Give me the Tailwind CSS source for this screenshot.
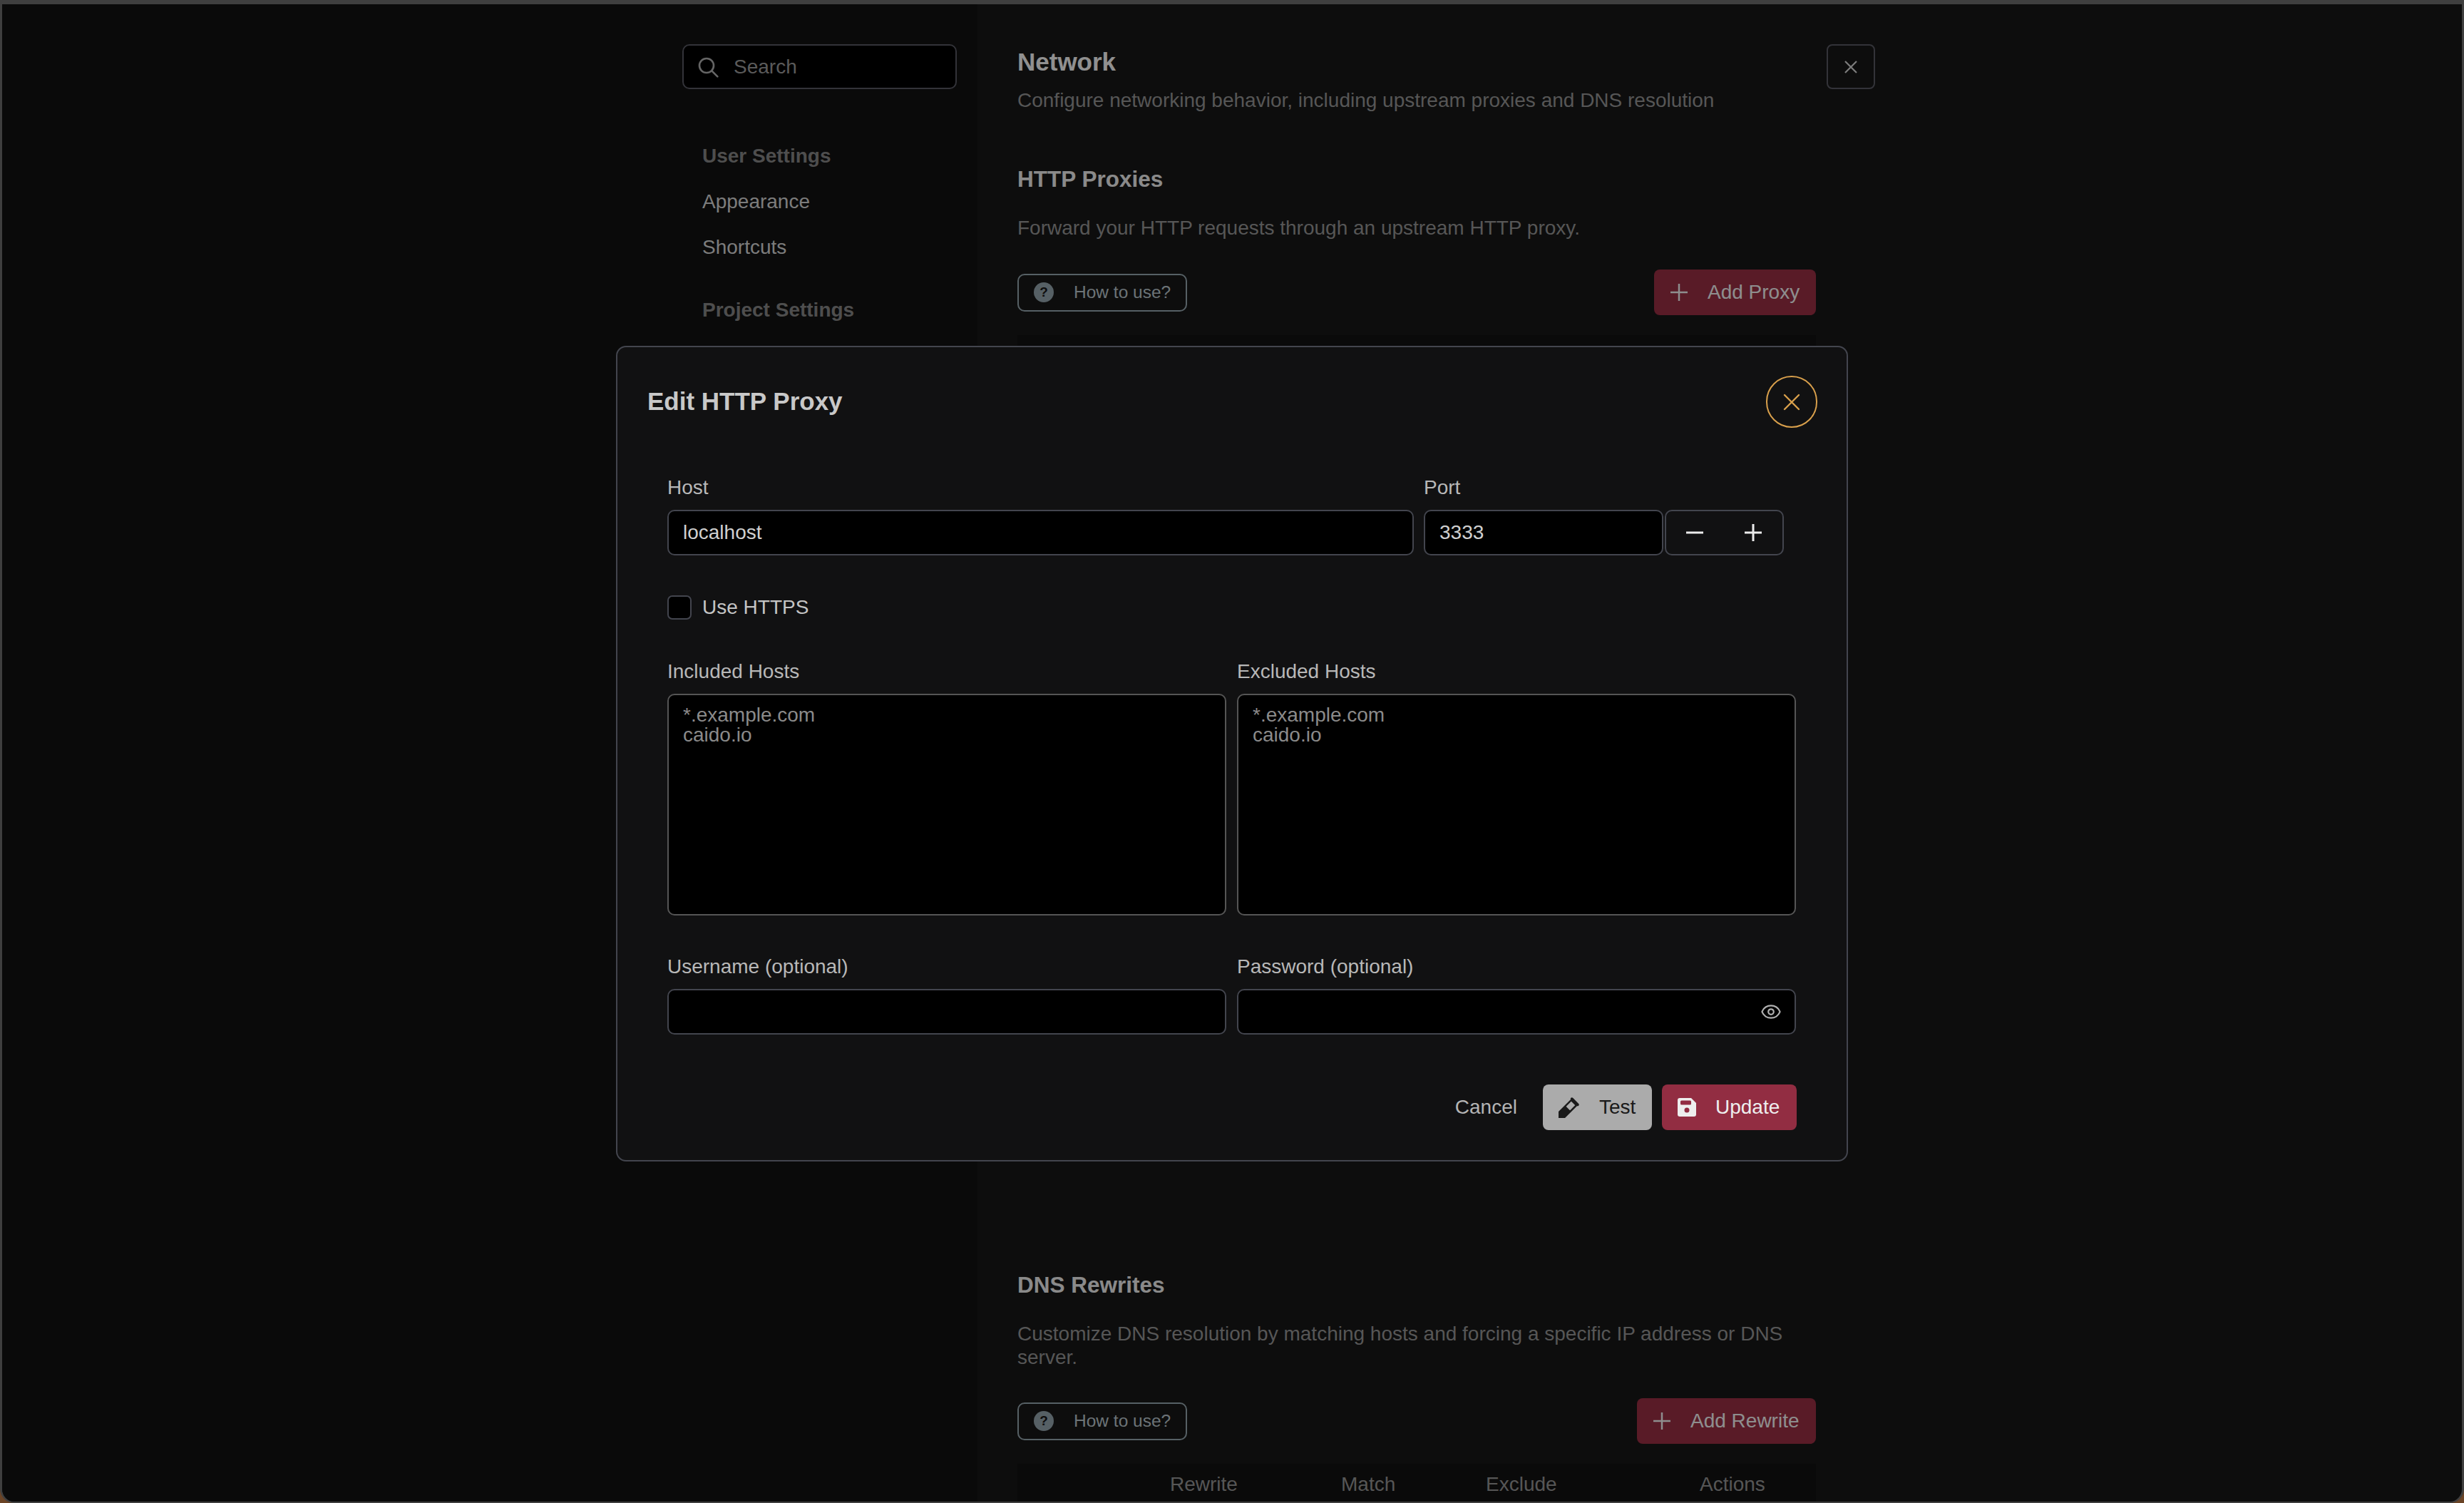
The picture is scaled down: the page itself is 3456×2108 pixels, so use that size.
<!DOCTYPE html>
<html lang="en">
<head>
    <meta charset="UTF-8">
    <title>Network</title>
    <script src="https://cdn.jsdelivr.net/npm/@tailwindcss/browser@4"></script>
</head>
<body class="bg-[#6b4426] font-['Liberation_Sans',Arial,sans-serif] text-[28px]">
    <div class="relative w-[3456px] h-[2108px] overflow-hidden rounded-b-[20px] border-t-[6px] border-x-[3px] border-b-[2px] border-[#3f3f3f] bg-[#161616]">
        <div class="flex h-full">
            <!-- sidebar -->
            <aside class="flex w-[1368px] shrink-0 justify-end bg-[#111111] pr-[29px] pt-[56px]">
                <div class="w-[385px]">
                    <div class="flex h-[63px] items-center rounded-[10px] border-2 border-[#55565f] bg-black pl-[18px] text-[#969696]">
                        <svg class="w-[32px] h-[32px]" viewBox="0 0 24 24" fill="none" stroke="#a8a8a8" stroke-width="2" stroke-linecap="round"><circle cx="10.5" cy="10.5" r="7.5"/><path d="M16 16l6 6"/></svg>
                        <span class="ml-[20px]">Search</span>
                    </div>
                    <div class="mt-[61px] pl-[28px]">
                        <div class="flex h-[65px] items-center font-bold text-[#828282]">User Settings</div>
                        <div class="flex h-[64px] items-center text-[#cfcfcf]">Appearance</div>
                        <div class="flex h-[63px] items-center text-[#cfcfcf]">Shortcuts</div>
                        <div class="mt-[25px] flex h-[64px] items-center font-bold text-[#828282]">Project Settings</div>
                    </div>
                </div>
            </aside>

            <!-- main -->
            <main class="flex items-start pl-[56px]">
                <div class="w-[1120px] pt-[61px]">
                    <h1 class="h-[40px] text-[35px] font-bold leading-[40px] text-[#f0f0f0]">Network</h1>
                    <p class="mt-[14px] h-[40px] leading-[40px] text-[#909090]">Configure networking behavior, including upstream proxies and DNS resolution</p>

                    <h2 class="mt-[70px] h-[40px] text-[31.5px] font-bold leading-[40px] text-[#e6e6e6]">HTTP Proxies</h2>
                    <p class="mt-[29px] h-[40px] leading-[40px] text-[#909090]">Forward your HTTP requests through an upstream HTTP proxy.</p>
                    <div class="mt-[38px] flex h-[64px] items-center justify-between">
                        <button class="flex h-[53px] w-[238px] items-center rounded-[10px] border-2 border-[#90a0a8] pl-[21px] text-[24.5px] text-[#b4c0c6]">
                            <span class="flex h-[28px] w-[28px] items-center justify-center rounded-full bg-[#90a0a8] text-[19px] font-bold text-[#161616]">?</span>
                            <span class="ml-[28px]">How to use?</span>
                        </button>
                        <button class="flex h-[64px] w-[227px] items-center rounded-[8px] bg-[#942d42] pl-[23px] text-[#ededed]">
                            <svg class="w-[24px] h-[24px]" viewBox="0 0 24 24" fill="none" stroke="#ededed" stroke-width="2.5"><path d="M12 0v24M0 12h24"/></svg>
                            <span class="ml-[28px]">Add Proxy</span>
                        </button>
                    </div>
                    <div class="mt-[28px] h-[1100px] bg-[#121212]"></div>

                    <h2 class="mt-[212px] h-[40px] text-[31.5px] font-bold leading-[40px] text-[#e6e6e6]">DNS Rewrites</h2>
                    <p class="mt-[32px] leading-[33px] text-[#909090]">Customize DNS resolution by matching hosts and forcing a specific IP address or DNS server.</p>
                    <div class="mt-[41px] flex h-[64px] items-center justify-between">
                        <button class="flex h-[53px] w-[238px] items-center rounded-[10px] border-2 border-[#90a0a8] pl-[21px] text-[24.5px] text-[#b4c0c6]">
                            <span class="flex h-[28px] w-[28px] items-center justify-center rounded-full bg-[#90a0a8] text-[19px] font-bold text-[#161616]">?</span>
                            <span class="ml-[28px]">How to use?</span>
                        </button>
                        <button class="flex h-[64px] w-[251px] items-center rounded-[8px] bg-[#942d42] pl-[23px] text-[#ededed]">
                            <svg class="w-[24px] h-[24px]" viewBox="0 0 24 24" fill="none" stroke="#ededed" stroke-width="2.5"><path d="M12 0v24M0 12h24"/></svg>
                            <span class="ml-[28px]">Add Rewrite</span>
                        </button>
                    </div>
                    <div class="mt-[28px] flex h-[58px] items-center bg-[#121212] pl-[214px] text-[#909090]">
                        <div class="w-[240px]">Rewrite</div>
                        <div class="w-[203px]">Match</div>
                        <div class="w-[300px]">Exclude</div>
                        <div>Actions</div>
                    </div>
                </div>
                <button class="ml-[15px] mt-[56px] flex h-[63px] w-[68px] items-center justify-center rounded-[8px] border-2 border-[#55565f]">
                    <svg class="w-[18px] h-[18px]" viewBox="0 0 18 18" fill="none" stroke="#d0d0d0" stroke-width="2.2"><path d="M1 1l16 16M17 1L1 17"/></svg>
                </button>
            </main>
        </div>

        <!-- dim layer -->
        <div class="absolute inset-0 bg-black/40"></div>

        <!-- modal -->
        <div class="absolute left-[861px] top-[479px] h-[1144px] w-[1728px] rounded-[14px] border-2 border-[#43454e] bg-[#111112]">
            <div class="flex h-[73px] mt-[40px] items-center justify-between pl-[42px] pr-[41px]">
                <h3 class="text-[35px] font-bold text-[#c8c8c8]">Edit HTTP Proxy</h3>
                <button class="flex h-[73px] w-[72px] items-center justify-center rounded-full border-2 border-[#d9a04c]">
                    <svg class="w-[24px] h-[24px]" viewBox="0 0 24 24" fill="none" stroke="#d9a04c" stroke-width="2.4" stroke-linecap="round"><path d="M2 2l20 20M22 2L2 22"/></svg>
                </button>
            </div>

            <div class="px-[70px] pt-[64px] text-[#b8b8b8]">
                <div class="flex">
                    <div class="w-[1047px]">
                        <div class="h-[40px] leading-[40px]">Host</div>
                        <div class="mt-[11px] flex h-[64px] items-center rounded-[10px] border-2 border-[#43454e] bg-black pl-[20px] text-[#d0d0d0]">localhost</div>
                    </div>
                    <div class="ml-[14px] w-[336px]">
                        <div class="h-[40px] leading-[40px]">Port</div>
                        <div class="mt-[11px] flex h-[64px] items-center rounded-[10px] border-2 border-[#43454e] bg-black pl-[20px] text-[#d0d0d0]">3333</div>
                    </div>
                    <div class="ml-[2px] mt-[51px] flex h-[64px] w-[167px] items-center rounded-[10px] border-2 border-[#43454e] pl-[28px]">
                        <svg class="w-[24px] h-[24px]" viewBox="0 0 24 24" fill="none" stroke="#ececec" stroke-width="3"><path d="M0 12h24"/></svg>
                        <svg class="ml-[58px] w-[24px] h-[24px]" viewBox="0 0 24 24" fill="none" stroke="#ececec" stroke-width="3"><path d="M12 0v24M0 12h24"/></svg>
                    </div>
                </div>

                <div class="mt-[56px] flex h-[34px] items-center">
                    <div class="h-[34px] w-[34px] rounded-[7px] border-2 border-[#43454e] bg-black"></div>
                    <span class="ml-[15px] text-[#c4c4c4]">Use HTTPS</span>
                </div>

                <div class="mt-[53px] grid grid-cols-[784px_784px] gap-x-[15px]">
                    <div>
                        <div class="h-[40px] leading-[40px]">Included Hosts</div>
                        <div class="mt-[11px] h-[311px] rounded-[10px] border-2 border-[#555555] bg-black pl-[20px] pt-[14px] leading-[28px] text-[#8a8a8a]">*.example.com<br>caido.io</div>
                    </div>
                    <div>
                        <div class="h-[40px] leading-[40px]">Excluded Hosts</div>
                        <div class="mt-[11px] h-[311px] rounded-[10px] border-2 border-[#555555] bg-black pl-[20px] pt-[14px] leading-[28px] text-[#8a8a8a]">*.example.com<br>caido.io</div>
                    </div>
                    <div class="mt-[52px]">
                        <div class="h-[40px] leading-[40px]">Username (optional)</div>
                        <div class="mt-[11px] h-[64px] rounded-[10px] border-2 border-[#43454e] bg-black"></div>
                    </div>
                    <div class="mt-[52px]">
                        <div class="h-[40px] leading-[40px]">Password (optional)</div>
                        <div class="mt-[11px] flex h-[64px] items-center justify-end rounded-[10px] border-2 border-[#43454e] bg-black pr-[18px]">
                            <svg class="w-[30px] h-[30px]" viewBox="0 0 24 24" fill="none" stroke="#b0b0b0" stroke-width="1.8" stroke-linecap="round" stroke-linejoin="round"><path d="M2.062 12.348a1 1 0 0 1 0-.696 10.75 10.75 0 0 1 19.876 0 1 1 0 0 1 0 .696 10.75 10.75 0 0 1-19.876 0"/><circle cx="12" cy="12" r="3"/></svg>
                        </div>
                    </div>
                </div>

                <div class="mt-[70px] flex items-center justify-end">
                    <span class="text-[#b4b4b4]">Cancel</span>
                    <button class="ml-[36px] flex h-[64px] w-[153px] items-center rounded-[8px] bg-[#ababab] pl-[22px] text-[#1a1a1a]">
                        <svg class="w-[30px] h-[30px]" viewBox="6 0.5 23.5 23.5"><g transform="rotate(45 15 15)"><rect x="9" y="1" width="12" height="3" rx="1.5" fill="#1a1a1a"/><path d="M11 4h8v19a4 4 0 0 1-8 0z" fill="none" stroke="#1a1a1a" stroke-width="2"/><path d="M11 13h8v10a4 4 0 0 1-8 0z" fill="#1a1a1a"/></g></svg>
                        <span class="ml-[27px]">Test</span>
                    </button>
                    <button class="ml-[14px] flex h-[64px] w-[189px] items-center rounded-[8px] bg-[#922d42] pl-[22px] text-[#eeeeee]">
                        <svg class="w-[26px] h-[26px]" viewBox="0 0 26 26"><path d="M3 0h16l7 7v16a3 3 0 0 1-3 3H3a3 3 0 0 1-3-3V3a3 3 0 0 1 3-3z" fill="#eeeeee"/><rect x="4" y="3.5" width="15" height="6" rx="1.5" fill="#922d42"/><circle cx="13" cy="17" r="3.5" fill="#922d42"/></svg>
                        <span class="ml-[27px]">Update</span>
                    </button>
                </div>
            </div>
        </div>
    </div>
</body>
</html>
